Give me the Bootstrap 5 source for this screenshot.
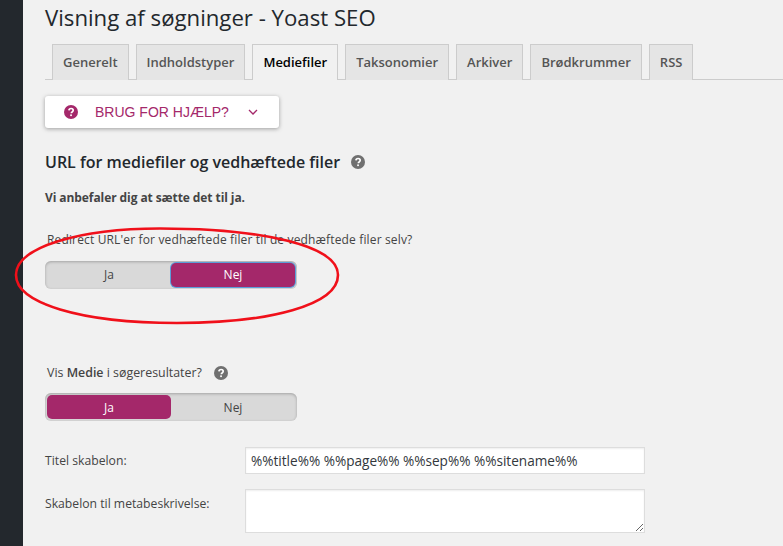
<!DOCTYPE html>
<html lang="da">
<head>
<meta charset="utf-8">
<title>Visning af søgninger - Yoast SEO</title>
<link href="https://cdn.jsdelivr.net/npm/bootstrap@5.3.0/dist/css/bootstrap.min.css" rel="stylesheet">
<style>
html,body{height:546px;overflow:hidden}
body{background:#f1f1f1;font-family:"Open Sans",sans-serif;color:#444;font-size:13px;line-height:18px}
.wp-shell{height:546px}
.wp-side{width:23px;background:#23282d;flex:none}
.wp-main{flex:1;min-width:0;padding-left:22px;position:relative}
.page-title{font-size:22.2px;line-height:28px;font-weight:400;color:#23282d;margin:4px 0 12px}
.yo-tabs{border-bottom:1px solid #ccc;padding-left:7px;gap:7px;height:36px;flex-wrap:nowrap}
.yo-tabs .nav-link{height:36px;padding:0 10px;background:#e5e5e5;border:1px solid #ccc;border-bottom:0;border-radius:0;color:#555;font-size:13px;font-weight:600;line-height:35px;margin:0}
.yo-tabs .nav-link.active{background:#f1f1f1;color:#000;border-color:#ccc;height:36px;margin-bottom:-1px;padding:0 10px}
.help-btn{width:234px;height:32px;margin-top:16px;padding:0 0 0 19px;background:#fff;border:0;border-radius:3px;box-shadow:0 1px 4px rgba(0,0,0,.35);color:#a4286a;font-family:"Liberation Sans",sans-serif;font-size:14px;gap:17px}
.help-btn:hover,.help-btn:active{background:#fff;color:#a4286a}
.sec-title{font-size:16px;line-height:22px;font-weight:600;color:#23282d;margin:23px 0 0;gap:11px}
.rec-line{font-size:12px;font-weight:700;letter-spacing:-.08px;color:#444;margin:15.5px 0 0;line-height:18px}
.q-label{margin:0 0 0 2px;line-height:18px;color:#444;gap:12px}
.q-one{font-size:12px;letter-spacing:.15px;margin-top:24.5px}
.q-two{font-size:12.4px;margin-top:75px}
.yo-toggle{width:252px;height:28px;margin-top:12px;padding:2px;background:#d9d9d9;border-radius:6px;box-shadow:inset 0 1px 3px rgba(0,0,0,.25)}
.q-two + .yo-toggle{margin-top:11px}
.q-two + .yo-toggle .btn{line-height:26px;height:24px}
.yo-toggle .btn{flex:1 1 50%;padding:0;border:0;border-radius:5px;font-size:12px;line-height:24px;color:#444;background:transparent}
.yo-toggle .btn.yo-on{background:#a4286a;color:#fff}
.yo-toggle .btn.yo-focus{box-shadow:0 0 0 1px #5b9dd9}
.fld-row{gap:0}
.fld-label{width:200px;flex:none;font-size:12.2px;line-height:18px;color:#444;margin:0}
.row-title .fld-label{padding-top:1px}
.row-desc .fld-label{padding-top:6px}
.fld-input{width:400px;flex:none;border:1px solid #ddd;border-radius:0;background:#fff;box-shadow:inset 0 1px 2px rgba(0,0,0,.07);font-size:13.6px;color:#32373c;padding:3px 5px;line-height:19px}
.fld-input:focus{border-color:#ddd;box-shadow:none}
input.fld-input{height:27px}
textarea.fld-input{height:44px;min-height:44px}
.row-title{margin-top:26px}
.row-desc{margin-top:15px}
.mark-ring{position:absolute;left:-13px;top:225px;width:335px;height:102px;pointer-events:none}
.chev-gap{margin-left:2px}
</style>
</head>
<body>
<div class="d-flex wp-shell">
  <div class="wp-side"></div>
  <main class="wp-main">
    <h1 class="page-title">Visning af søgninger - Yoast SEO</h1>
    <ul class="nav nav-tabs yo-tabs">
      <li class="nav-item"><a class="nav-link" href="#">Generelt</a></li>
      <li class="nav-item"><a class="nav-link" href="#">Indholdstyper</a></li>
      <li class="nav-item"><a class="nav-link active" href="#">Mediefiler</a></li>
      <li class="nav-item"><a class="nav-link" href="#">Taksonomier</a></li>
      <li class="nav-item"><a class="nav-link" href="#">Arkiver</a></li>
      <li class="nav-item"><a class="nav-link" href="#">Brødkrummer</a></li>
      <li class="nav-item"><a class="nav-link" href="#">RSS</a></li>
    </ul>
    <button type="button" class="btn help-btn d-flex align-items-center">
      <svg width="14" height="14" viewBox="0 0 14 14"><circle cx="7" cy="7" r="7" fill="#a4286a"/><path d="M4.9 5.4C5 4.2 5.9 3.5 7.1 3.5c1.2 0 2.1.7 2.1 1.8 0 .9-.5 1.3-1.1 1.7-.5.3-.7.5-.7 1v.3" fill="none" stroke="#fff" stroke-width="1.7"/><rect x="6.2" y="9.4" width="1.7" height="1.7" fill="#fff"/></svg>
      <span>BRUG FOR HJÆLP?</span>
      <svg class="chev-gap" width="10" height="6" viewBox="0 0 10 6"><path d="M1 1l4 4 4-4" fill="none" stroke="#a4286a" stroke-width="1.3"/></svg>
    </button>
    <h2 class="sec-title d-flex align-items-center">URL for mediefiler og vedhæftede filer
      <svg width="14" height="14" viewBox="0 0 14 14"><circle cx="7" cy="7" r="7" fill="#707070"/><path d="M4.9 5.4C5 4.2 5.9 3.5 7.1 3.5c1.2 0 2.1.7 2.1 1.8 0 .9-.5 1.3-1.1 1.7-.5.3-.7.5-.7 1v.3" fill="none" stroke="#fff" stroke-width="1.7"/><rect x="6.2" y="9.4" width="1.7" height="1.7" fill="#fff"/></svg>
    </h2>
    <p class="rec-line">Vi anbefaler dig at sætte det til ja.</p>
    <p class="q-label q-one">Redirect URL'er for vedhæftede filer til de vedhæftede filer selv?</p>
    <div class="yo-toggle d-flex">
      <button type="button" class="btn">Ja</button>
      <button type="button" class="btn yo-on yo-focus">Nej</button>
    </div>
    <p class="q-label q-two d-flex align-items-center"><span>Vis <b class="fw-semibold">Medie</b> i søgeresultater?</span>
      <svg width="14" height="14" viewBox="0 0 14 14"><circle cx="7" cy="7" r="7" fill="#707070"/><path d="M4.9 5.4C5 4.2 5.9 3.5 7.1 3.5c1.2 0 2.1.7 2.1 1.8 0 .9-.5 1.3-1.1 1.7-.5.3-.7.5-.7 1v.3" fill="none" stroke="#fff" stroke-width="1.7"/><rect x="6.2" y="9.4" width="1.7" height="1.7" fill="#fff"/></svg>
    </p>
    <div class="yo-toggle d-flex">
      <button type="button" class="btn yo-on">Ja</button>
      <button type="button" class="btn">Nej</button>
    </div>
    <div class="d-flex align-items-center fld-row row-title">
      <label class="fld-label" for="f-title">Titel skabelon:</label>
      <input id="f-title" class="form-control fld-input" type="text" value="%%title%% %%page%% %%sep%% %%sitename%%">
    </div>
    <div class="d-flex align-items-start fld-row row-desc">
      <label class="fld-label" for="f-desc">Skabelon til metabeskrivelse:</label>
      <textarea id="f-desc" class="form-control fld-input"></textarea>
    </div>
    <svg class="mark-ring" viewBox="0 0 335 102"><path d="M6 50C6 22 70 3.5 150 3.5c100 0 178 16.500 178 46.500 0 30-68 48-161 48C70 98 6 78 6 50Z" fill="none" stroke="#f0101a" stroke-width="2.6"/></svg>
  </main>
</div>
<script src="https://cdn.jsdelivr.net/npm/bootstrap@5.3.0/dist/js/bootstrap.bundle.min.js"></script>
</body>
</html>
